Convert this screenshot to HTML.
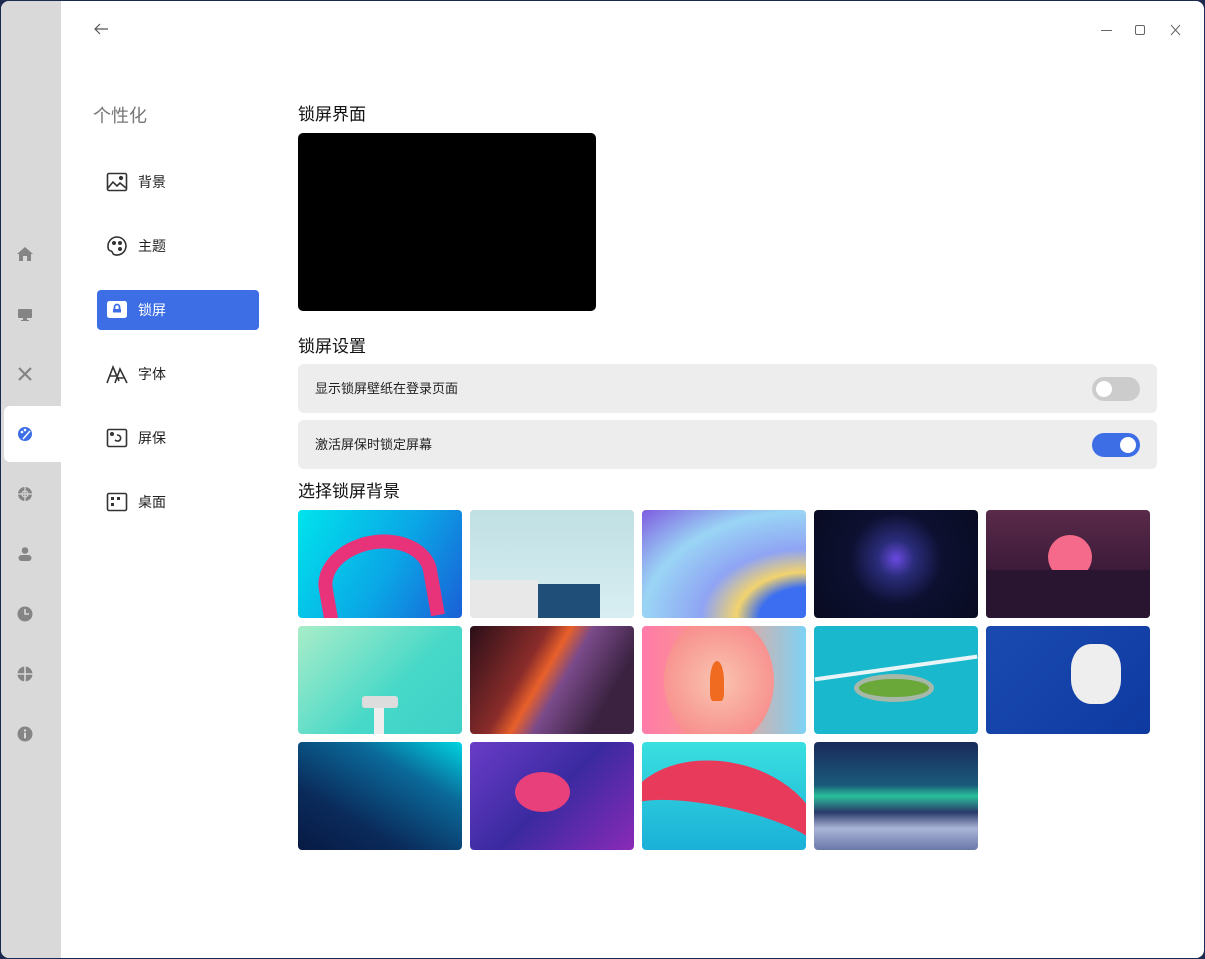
<!DOCTYPE html>
<html><head><meta charset="utf-8"><style>
*{margin:0;padding:0;box-sizing:border-box}
html,body{width:1205px;height:959px;overflow:hidden;background:#1b2a4e}
body{font-family:"Liberation Sans","Noto Sans CJK SC",sans-serif}
#win{position:absolute;left:1px;top:1px;width:1203px;height:957px;background:#fff;border-radius:8px;overflow:hidden}
#side{position:absolute;left:0;top:0;width:60px;height:957px;background:#d9d9d9}
.si{position:absolute;left:14px;width:20px;height:20px;fill:#858585}
#selbg{position:absolute;left:3px;top:405px;width:58px;height:56px;background:#fff;border-radius:6px 0 0 6px}
.abs{position:absolute}
.nav{position:absolute;left:96px;width:162px;height:40px;border-radius:4px;font-size:14px;color:#222;line-height:40px;padding-left:41px}
.nav svg{position:absolute;left:9px;top:9px;width:22px;height:22px}
.nav.on{background:#3d6ee6;color:#fff}
h2{position:absolute;left:297px;font-size:17px;font-weight:normal;color:#111}
.row{position:absolute;left:297px;width:859px;height:49px;background:#ededed;border-radius:6px;font-size:13px;color:#222;line-height:49px;padding-left:17px}
.tg{position:absolute;right:17px;top:13px;width:48px;height:24px;border-radius:12px;background:#ccc}
.tg i{position:absolute;top:4px;width:16px;height:16px;border-radius:8px;background:#fff}
.wp{position:absolute;width:164px;height:108px;border-radius:4px;overflow:hidden}
</style></head><body><div id="win">
<div id="side">
<div id="selbg"></div>
<svg class="si" style="top:243px" viewBox="0 0 20 20"><path d="M10 3L2 10h2v7h4v-5h4v5h4v-7h2z"/></svg>
<svg class="si" style="top:303px" viewBox="0 0 20 20"><rect x="3" y="5" width="14" height="9" rx="1"/><rect x="8" y="14" width="4" height="2"/><rect x="6" y="16" width="8" height="1"/></svg>
<svg class="si" style="top:363px" viewBox="0 0 20 20"><path d="M4 4l12 12M16 4L4 16" stroke="#858585" stroke-width="2.2" fill="none"/></svg>
<svg class="si" style="top:423px;fill:#3d6ee6" viewBox="0 0 20 20"><circle cx="10" cy="10" r="7"/><circle cx="7" cy="8" r="1.3" fill="#fff"/><circle cx="10" cy="6" r="1.3" fill="#fff"/><path d="M8 15l7-8" stroke="#fff" stroke-width="1.5"/></svg>
<svg class="si" style="top:483px" viewBox="0 0 20 20"><circle cx="10" cy="10" r="7"/><path d="M3 10h14M10 3v14" stroke="#d9d9d9" stroke-width="1.2"/><circle cx="10" cy="10" r="3" fill="none" stroke="#d9d9d9" stroke-width="1.2"/></svg>
<svg class="si" style="top:543px" viewBox="0 0 20 20"><circle cx="10" cy="6.5" r="3.3"/><rect x="3.5" y="11" width="13" height="6" rx="3"/></svg>
<svg class="si" style="top:603px" viewBox="0 0 20 20"><circle cx="10" cy="10" r="7.5"/><path d="M10 5v5h4" stroke="#d9d9d9" stroke-width="1.6" fill="none"/></svg>
<svg class="si" style="top:663px" viewBox="0 0 20 20"><circle cx="10" cy="10" r="7.5"/><path d="M2 10h16M10 2v16" stroke="#d9d9d9" stroke-width="1.6"/></svg>
<svg class="si" style="top:723px" viewBox="0 0 20 20"><circle cx="10" cy="10" r="7.5"/><circle cx="10" cy="6.5" r="1.2" fill="#d9d9d9"/><rect x="9" y="8.8" width="2" height="5.5" fill="#d9d9d9"/></svg>
</div>
<svg class="abs" style="left:92px;top:21px" width="16" height="14" viewBox="0 0 16 14"><path d="M7 2L2 7l5 5M2 7h13" stroke="#555" stroke-width="1.2" fill="none"/></svg>
<svg class="abs" style="left:1098px;top:22px" width="84" height="14" viewBox="0 0 84 14"><path d="M2 7.5h11" stroke="#666" stroke-width="1"/><rect x="36.5" y="2.5" width="9" height="9" rx="1.5" stroke="#666" fill="none"/><path d="M72 2l9 10M81 2l-9 10" stroke="#666" stroke-width="1"/></svg>
<div class="abs" style="left:92px;top:101px;font-size:18px;color:#777">个性化</div>
<div class="nav" style="top:161px"><svg viewBox="0 0 22 22" fill="none" stroke="#333" stroke-width="1.6"><rect x="1.5" y="2.5" width="19" height="17" rx="1.5"/><path d="M2 17l5-6 4 4 3-3 6 5"/><circle cx="15" cy="7" r="1.3" fill="#333"/></svg>背景</div>
<div class="nav" style="top:225px"><svg viewBox="0 0 22 22" fill="none" stroke="#333" stroke-width="1.6"><path d="M11 2a9 9 0 1 1-3 17.5c-2-.7-1-3-3-3.5S2 15 2 11a9 9 0 0 1 9-9z"/><circle cx="8" cy="8" r="1.2" fill="#333"/><circle cx="14" cy="8" r="1.2" fill="#333"/><circle cx="14" cy="14" r="1.2" fill="#333"/></svg>主题</div>
<div class="nav on" style="top:289px"><svg viewBox="0 0 22 22"><rect x="1" y="2" width="20" height="17" rx="2.5" fill="#fff"/><rect x="7" y="10" width="8" height="7" fill="#3d6ee6"/><path d="M8.5 10V8a2.5 2.5 0 0 1 5 0v2" stroke="#3d6ee6" stroke-width="1.8" fill="none"/><rect x="5" y="13" width="12" height="5" fill="#fff"/><rect x="7" y="12" width="8" height="1.5" fill="#3d6ee6"/></svg>锁屏</div>
<div class="nav" style="top:353px"><svg viewBox="0 0 22 22" fill="none" stroke="#333" stroke-width="1.6"><path d="M1 20L7 4l6 14M4 13h6M9 20l5-14 7 14M11.5 15h6"/></svg>字体</div>
<div class="nav" style="top:417px"><svg viewBox="0 0 22 22" fill="none" stroke="#333" stroke-width="1.6"><rect x="1.5" y="2.5" width="19" height="17" rx="1.5"/><circle cx="6" cy="7" r="1.2" fill="#333"/><path d="M11 8c3 0 4 2 3.5 4S11 15 9 13"/></svg>屏保</div>
<div class="nav" style="top:481px"><svg viewBox="0 0 22 22" fill="none" stroke="#333" stroke-width="1.6"><rect x="1.5" y="2.5" width="19" height="17" rx="1.5"/><rect x="5" y="6" width="3" height="3" fill="#333" stroke="none"/><rect x="11" y="6" width="3" height="3" fill="#333" stroke="none"/><rect x="5" y="12" width="3" height="3" fill="#333" stroke="none"/></svg>桌面</div>

<h2 style="top:99px">锁屏界面</h2>
<div class="abs" style="left:297px;top:132px;width:298px;height:178px;background:#000;border-radius:5px"></div>
<h2 style="top:331px">锁屏设置</h2>
<div class="row" style="top:363px">显示锁屏壁纸在登录页面<div class="tg"><i style="left:4px"></i></div></div>
<div class="row" style="top:419px">激活屏保时锁定屏幕<div class="tg" style="background:#3d6ee6"><i style="right:4px"></i></div></div>
<h2 style="top:476px">选择锁屏背景</h2>

<div class="wp" style="left:297px;top:509px;background:linear-gradient(120deg,#00e4ec,#0aa7e6 55%,#1a5fd6)"><div class="abs" style="left:20px;top:25px;width:120px;height:90px;border-radius:50% 50% 0 0;border:14px solid #e8327a;border-bottom:none;transform:rotate(-10deg)"></div></div>
<div class="wp" style="left:469px;top:509px;background:linear-gradient(180deg,#bfe0e4,#d9eef2)"><div class="abs" style="left:0;top:70px;width:68px;height:40px;background:#e8e8e8"></div><div class="abs" style="left:68px;top:74px;width:62px;height:40px;background:#1f4f78"></div></div>
<div class="wp" style="left:641px;top:509px;background:radial-gradient(ellipse at 100% 100%,#3b6ef0 20%,#f2d36e 30%,#8fa4f4 45%,#9ad5f5 70%,#7e5ce0)"></div>
<div class="wp" style="left:813px;top:509px;background:radial-gradient(circle at 50% 45%,#6a4ae0 0,#2a2c7a 18%,#0d1030 45%,#080b20)"></div>
<div class="wp" style="left:985px;top:509px;background:linear-gradient(180deg,#5a2a4a,#3a1a38 60%,#1a0f22)"><div class="abs" style="left:62px;top:25px;width:44px;height:44px;border-radius:50%;background:#f56a8a"></div><div class="abs" style="left:0;top:60px;width:164px;height:48px;background:#2a1530"></div></div>

<div class="wp" style="left:297px;top:625px;background:linear-gradient(135deg,#a8edc8,#46d8c8 60%,#3fd0c8)"><div class="abs" style="left:64px;top:70px;width:36px;height:12px;background:#ddd;border-radius:3px"></div><div class="abs" style="left:76px;top:82px;width:10px;height:26px;background:#eee"></div></div>
<div class="wp" style="left:469px;top:625px;background:linear-gradient(120deg,#2a0f18,#8a2c2a 35%,#e8602a 45%,#7a4a8a 55%,#3a2240 80%)"></div>
<div class="wp" style="left:641px;top:625px;background:linear-gradient(90deg,#ff7aa8,#f9a08a 50%,#7ed2f5)"><div class="abs" style="left:22px;top:-10px;width:110px;height:130px;border-radius:50%;background:radial-gradient(circle,#f9c4b0,#f87a80)"></div><div class="abs" style="left:68px;top:35px;width:14px;height:40px;background:#f06a20;border-radius:50% 50% 20% 20%"></div></div>
<div class="wp" style="left:813px;top:625px;background:#1ab8cc"><div class="abs" style="left:0;top:40px;width:164px;height:4px;background:#e8f4f6;transform:rotate(-8deg)"></div><div class="abs" style="left:40px;top:48px;width:80px;height:28px;border-radius:50%;background:#6aa83a;border:5px solid #a6b8a8"></div></div>
<div class="wp" style="left:985px;top:625px;background:linear-gradient(135deg,#1a4ab0,#0e3aa0)"><div class="abs" style="left:85px;top:18px;width:50px;height:60px;border-radius:40%;background:#eee"></div></div>

<div class="wp" style="left:297px;top:741px;background:linear-gradient(210deg,#00d4e0 0,#0a6a9a 30%,#0a2a5a 70%,#081a44)"></div>
<div class="wp" style="left:469px;top:741px;background:linear-gradient(135deg,#6a3cc8,#3a2aa0 50%,#8a2ab8)"><div class="abs" style="left:45px;top:30px;width:55px;height:40px;border-radius:50%;background:#e8407a"></div></div>
<div class="wp" style="left:641px;top:741px;background:linear-gradient(180deg,#3ae0e0,#1ab0d8)"><div class="abs" style="left:-20px;top:20px;width:200px;height:140px;border-radius:50%;border-top:45px solid #e83a5a;transform:rotate(12deg)"></div></div>
<div class="wp" style="left:813px;top:741px;background:linear-gradient(180deg,#1a2a5a,#1a5a7a 40%,#2ac09a 50%,#2a3a6a 65%,#aab4d8 80%,#6a78a8)"></div>
</div></body></html>
